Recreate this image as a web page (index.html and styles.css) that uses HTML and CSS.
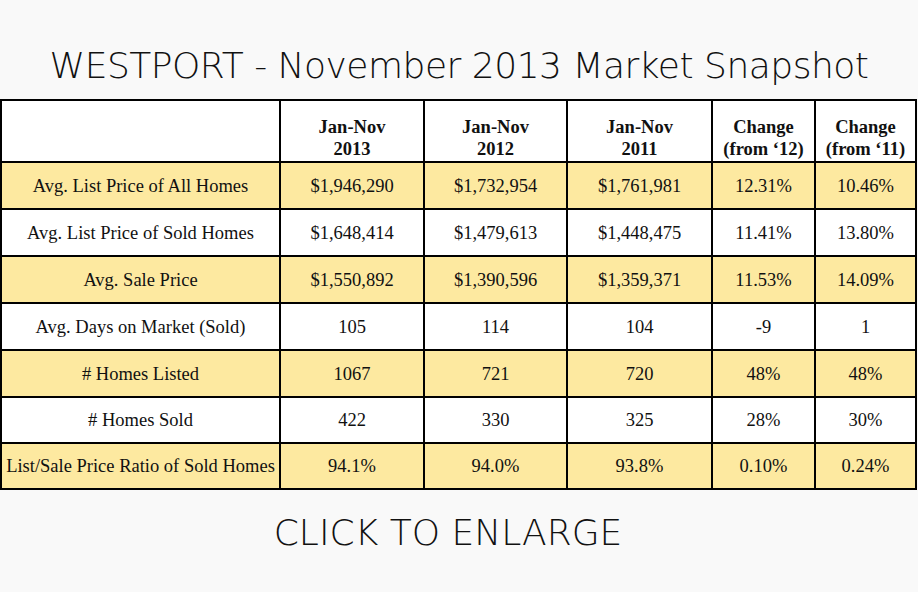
FILE: index.html
```html
<!DOCTYPE html>
<html lang="en">
<head>
<meta charset="utf-8">
<title>WESTPORT - November 2013 Market Snapshot</title>
<link rel="stylesheet" href="styles.css">
</head>
<body>
<div class="page">
  <h1 class="title">WESTPORT - November 2013 Market Snapshot</h1>
  <table class="snapshot">
    <colgroup>
      <col class="c1"><col class="c2"><col class="c3"><col class="c4"><col class="c5"><col class="c6">
    </colgroup>
    <thead>
      <tr class="head">
        <th></th>
        <th>Jan-Nov<br>2013</th>
        <th>Jan-Nov<br>2012</th>
        <th>Jan-Nov<br>2011</th>
        <th>Change<br>(from ‘12)</th>
        <th>Change<br>(from ‘11)</th>
      </tr>
    </thead>
    <tbody>
      <tr class="yellow"><td>Avg. List Price of All Homes</td><td>$1,946,290</td><td>$1,732,954</td><td>$1,761,981</td><td>12.31%</td><td>10.46%</td></tr>
      <tr class="white"><td>Avg. List Price of Sold Homes</td><td>$1,648,414</td><td>$1,479,613</td><td>$1,448,475</td><td>11.41%</td><td>13.80%</td></tr>
      <tr class="yellow"><td>Avg. Sale Price</td><td>$1,550,892</td><td>$1,390,596</td><td>$1,359,371</td><td>11.53%</td><td>14.09%</td></tr>
      <tr class="white"><td>Avg. Days on Market (Sold)</td><td>105</td><td>114</td><td>104</td><td>-9</td><td>1</td></tr>
      <tr class="yellow"><td># Homes Listed</td><td>1067</td><td>721</td><td>720</td><td>48%</td><td>48%</td></tr>
      <tr class="white short"><td># Homes Sold</td><td>422</td><td>330</td><td>325</td><td>28%</td><td>30%</td></tr>
      <tr class="yellow short"><td>List/Sale Price Ratio of Sold Homes</td><td>94.1%</td><td>94.0%</td><td>93.8%</td><td>0.10%</td><td>0.24%</td></tr>
    </tbody>
  </table>
  <p class="enlarge">CLICK TO ENLARGE</p>
</div>
</body>
</html>
```

FILE: styles.css
```css
html, body {
  margin: 0;
  padding: 0;
  background: #f9f9f9;
}

.page {
  width: 918px;
  height: 592px;
  overflow: hidden;
}

.title {
  margin: 0;
  height: 99px;
  box-sizing: border-box;
  padding-top: 43px;
  text-align: center;
  font-family: "DejaVu Sans", sans-serif;
  font-weight: 300;
  font-size: 36px;
  line-height: 46px;
  color: #111;
  letter-spacing: -0.5px;
  white-space: nowrap;
}

.snapshot {
  width: 917px;
  table-layout: fixed;
  border-collapse: separate;
  border-spacing: 0;
  border-top: 2px solid #000;
  border-left: 2px solid #000;
  font-family: "Liberation Serif", "Times New Roman", serif;
  font-size: 18.5px;
  color: #111;
}

.snapshot col.c1 { width: 279px; }
.snapshot col.c2 { width: 144px; }
.snapshot col.c3 { width: 143px; }
.snapshot col.c4 { width: 145px; }
.snapshot col.c5 { width: 103px; }
.snapshot col.c6 { width: 101px; }

.snapshot th,
.snapshot td {
  border-right: 2px solid #000;
  border-bottom: 2px solid #000;
  padding: 0;
  text-align: center;
  vertical-align: middle;
  white-space: nowrap;
  box-sizing: border-box;
}

.snapshot th {
  background: #fff;
  font-weight: bold;
  font-size: 18.5px;
  line-height: 22px;
  height: 62px;
  padding-top: 13px;
}

.snapshot td {
  height: 47px;
  line-height: 20px;
}

.snapshot tr.short td {
  height: 46px;
}

.snapshot tr.yellow td {
  background: #fde9a0;
}

.snapshot tr.white td {
  background: #fff;
}

.enlarge {
  margin: 0;
  padding-top: 20px;
  padding-right: 22px;
  text-align: center;
  font-family: "DejaVu Sans", sans-serif;
  font-weight: 300;
  font-size: 36px;
  line-height: 46px;
  color: #111;
}
```
